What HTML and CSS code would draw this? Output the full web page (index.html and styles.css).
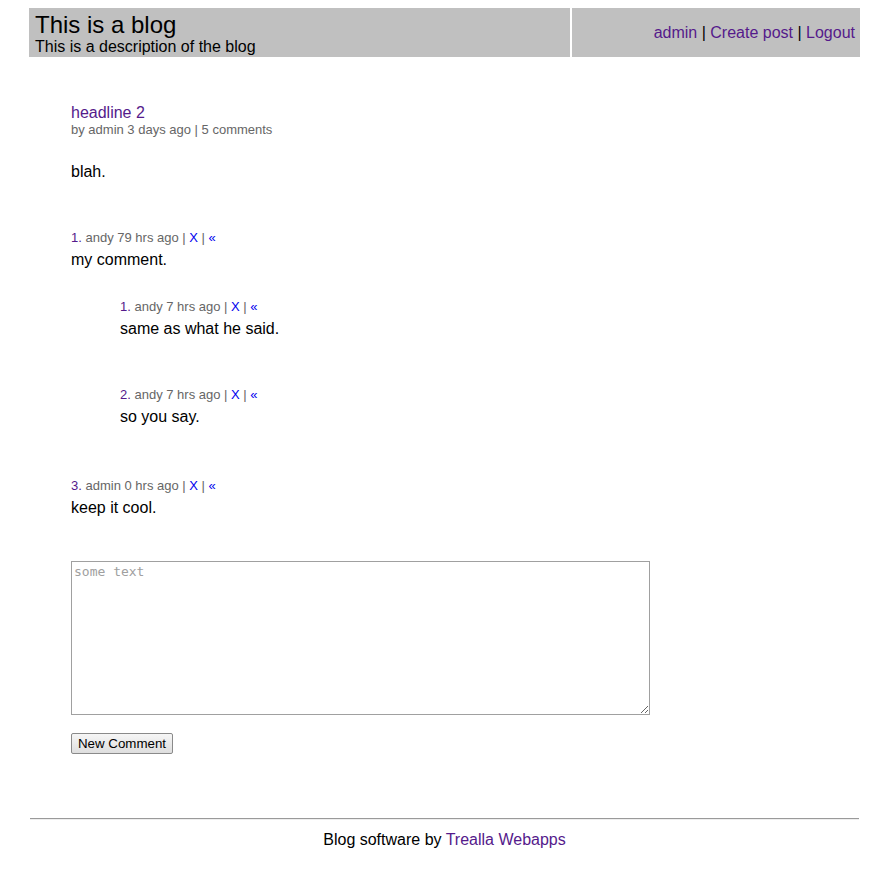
FILE: index.html
```html
<!DOCTYPE html>
<html>
<head>
<meta charset="utf-8">
<title>This is a blog</title>
<link rel="stylesheet" href="styles.css">
</head>
<body>
<div class="page">
  <header class="top">
    <div class="brand">
      <div class="title">This is a blog</div>
      <div class="desc">This is a description of the blog</div>
    </div>
    <div class="nav">
      <a href="#">admin</a> | <a href="#">Create post</a> | <a href="#">Logout</a>
    </div>
  </header>

  <main class="content">
    <div class="post">
      <a class="headline" href="#">headline 2</a>
      <div class="meta">by admin 3 days ago | 5 comments</div>
      <p class="body">blah.</p>
    </div>

    <div class="comment">
      <div class="cmeta"><a class="num" href="#">1.</a> andy 79 hrs ago | <a class="act" href="#">X</a> | <a class="act" href="#">&laquo;</a></div>
      <div class="ctext">my comment.</div>
      <div class="replies">
        <div class="comment">
          <div class="cmeta"><a class="num" href="#">1.</a> andy 7 hrs ago | <a class="act" href="#">X</a> | <a class="act" href="#">&laquo;</a></div>
          <div class="ctext">same as what he said.</div>
        </div>
        <div class="comment">
          <div class="cmeta"><a class="num" href="#">2.</a> andy 7 hrs ago | <a class="act" href="#">X</a> | <a class="act" href="#">&laquo;</a></div>
          <div class="ctext">so you say.</div>
        </div>
      </div>
    </div>

    <div class="comment">
      <div class="cmeta"><a class="num" href="#">3.</a> admin 0 hrs ago | <a class="act" href="#">X</a> | <a class="act" href="#">&laquo;</a></div>
      <div class="ctext">keep it cool.</div>
    </div>

    <form class="reply">
      <textarea class="box" placeholder="some text"></textarea>
      <button type="button" class="btn">New Comment</button>
    </form>
  </main>

  <footer class="foot">
    <hr class="rule">
    <div class="credit">Blog software by <a href="#">Trealla Webapps</a></div>
  </footer>
</div>
</body>
</html>
```

FILE: styles.css
```css
body {
  margin: 8px;
  font-family: "Liberation Sans", Arial, sans-serif;
  font-size: 16px;
  color: #000;
  background: #fff;
}

a {
  color: #551a8b;
  text-decoration: none;
}

.page {
  margin-left: 21px;
  width: 831px;
}

.top {
  display: flex;
  gap: 2px;
  height: 49px;
}

.brand {
  width: 541px;
  background: #c0c0c0;
  padding: 3px 6px 0;
  box-sizing: border-box;
}

.title {
  font-size: 24px;
  line-height: 27px;
}

.desc {
  font-size: 16px;
  line-height: 17px;
}

.nav {
  flex: 1;
  background: #c0c0c0;
  display: flex;
  align-items: center;
  justify-content: flex-end;
  padding: 0 5px 0 0;
  white-space: pre;
}

.content {
  padding: 47px 0 0 42px;
}

.post {
  margin-bottom: 49px;
}

.headline {
  display: block;
  font-size: 16px;
  line-height: 18px;
}

.meta {
  font-size: 13px;
  line-height: 15px;
  color: #666;
  margin-top: 0;
}

.body {
  margin: 26px 0 0;
  line-height: 18px;
}

.comment {
  margin-bottom: 34px;
}

.cmeta {
  font-size: 13px;
  line-height: 15px;
  color: #666;
}

.cmeta .act {
  color: #0000ee;
}

.ctext {
  margin-top: 6px;
  line-height: 18px;
}

.replies {
  margin-top: 30px;
  padding-left: 49px;
}

.replies .comment {
  margin-bottom: 49px;
}

.replies .comment:last-child {
  margin-bottom: 52px;
}

.reply {
  margin-top: 44px;
  display: flex;
  flex-direction: column;
  align-items: flex-start;
  gap: 18px;
}

.box {
  box-sizing: border-box;
  width: 579px;
  height: 154px;
  border: 1px solid #a0a0a0;
  padding: 2px;
  margin: 0;
  font-family: "DejaVu Sans Mono", monospace;
  font-size: 13px;
}

.box::placeholder {
  color: #a0a0a0;
}

.btn {
  font-family: "Liberation Sans", Arial, sans-serif;
  font-size: 13.33px;
  height: 21px;
  width: 102px;
  padding: 0;
  border: 1px solid #8a8a8a;
  border-radius: 2px;
  background: linear-gradient(#f6f6f6, #dedede);
  color: #000;
}

.foot {
  margin-top: 64px;
}

.rule {
  margin: 0 1px;
  border: none;
  border-top: 1px solid #9a9a9a;
  border-bottom: 1px solid #eee;
  height: 0;
}

.credit {
  text-align: center;
  margin-top: 11px;
  line-height: 18px;
}
```
